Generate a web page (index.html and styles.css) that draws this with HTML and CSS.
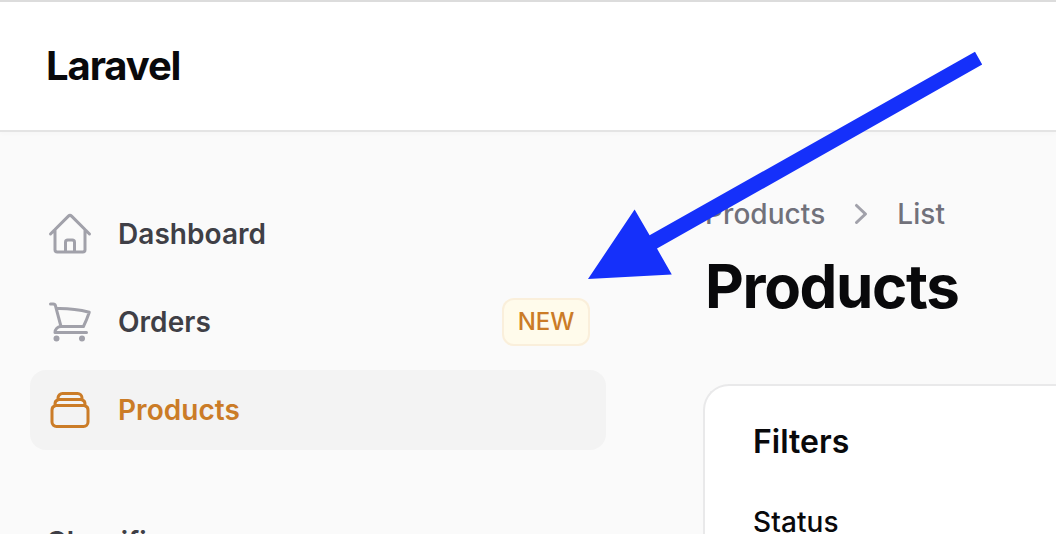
FILE: index.html
```html
<!DOCTYPE html>
<html lang="en">
<head>
<meta charset="utf-8">
<title>Products - Laravel</title>
<link rel="stylesheet" href="styles.css">
</head>
<body>
<header class="topbar"><div class="brand">Laravel</div></header>
<div class="layout">
  <aside class="sidebar">
    <nav class="nav">
      <a class="nav-item">
        <svg class="nav-icon" viewBox="0 0 24 24"><path d="M2.25 12l8.954-8.955c.44-.439 1.152-.439 1.591 0L21.75 12M4.5 9.75v10.125c0 .621.504 1.125 1.125 1.125H9.75v-4.875c0-.621.504-1.125 1.125-1.125h2.25c.621 0 1.125.504 1.125 1.125V21h4.125c.621 0 1.125-.504 1.125-1.125V9.75M8.25 21h8.25"/></svg>
        <span class="nav-label">Dashboard</span>
      </a>
      <a class="nav-item">
        <svg class="nav-icon" viewBox="0 0 24 24"><path d="M2.25 3h1.386c.51 0 .955.343 1.087.835l.383 1.437M7.5 14.25a3 3 0 00-3 3h15.75m-12.75-3h11.218c1.121-2.3 2.1-4.684 2.924-7.138a60.114 60.114 0 00-16.536-1.84M7.5 14.25L5.106 5.272M6 20.25a.75.75 0 11-1.5 0 .75.75 0 011.5 0zm12.75 0a.75.75 0 11-1.5 0 .75.75 0 011.5 0z"/></svg>
        <span class="nav-label">Orders</span>
        <span class="badge">NEW</span>
      </a>
      <a class="nav-item active">
        <svg class="nav-icon" viewBox="0 0 24 24"><path d="M6 6.878V6a2.25 2.25 0 012.25-2.25h7.5A2.25 2.25 0 0118 6v.878m-12 0c.235-.083.487-.128.75-.128h10.5c.263 0 .515.045.75.128m-12 0A2.25 2.25 0 004.5 9v.878m13.5-3A2.25 2.25 0 0119.5 9v.878m0 0a2.246 2.246 0 00-.75-.128H5.25c-.263 0-.515.045-.75.128m15 0A2.25 2.25 0 0121 12v6a2.25 2.25 0 01-2.25 2.25H5.25A2.25 2.25 0 013 18v-6c0-.98.626-1.813 1.5-2.122"/></svg>
        <span class="nav-label">Products</span>
      </a>
    </nav>
    <div class="group-label">Classifi</div>
  </aside>
  <main class="main">
    <div class="breadcrumbs">
      <span>Products</span>
      <svg class="chevron" viewBox="0 0 20 20"><path d="M7.21 14.77a.75.75 0 01.02-1.06L11.168 10 7.23 6.29a.75.75 0 111.04-1.08l4.5 4.25a.75.75 0 010 1.08l-4.5 4.25a.75.75 0 01-1.06-.02z"/></svg>
      <span>List</span>
    </div>
    <h1 class="title">Products</h1>
    <section class="card">
      <h2 class="card-title">Filters</h2>
      <div class="field-label">Status</div>
    </section>
  </main>
</div>
<svg class="arrow" viewBox="0 0 1056 534"><path d="M588 279L634.6 209.5L649.6 235.3L975 51.8L982.2 64.6L657 248.6L671.8 274.6Z"/></svg>
</body>
</html>
```
FILE: styles.css
```css
* { box-sizing: border-box; }
body {
  margin: 0;
  height: 534px;
  overflow: hidden;
  display: flex;
  flex-direction: column;
  background: #fafafa;
  color: #09090b;
  font-family: Inter, sans-serif;
  font-size: 28px;
  line-height: 40px;
}
.topbar {
  flex: none;
  height: 132px;
  padding-left: 46px;
  display: flex;
  align-items: center;
  background: #fff;
  border-top: 2px solid #dcdcdc;
  border-bottom: 2px solid #e4e4e4;
  box-shadow: 0 2px 4px rgba(0, 0, 0, .02);
}
.brand {
  font-size: 40px;
  font-weight: 700;
  letter-spacing: -1.1px;
}
.layout { display: flex; flex: 1; min-height: 0; }
.sidebar {
  flex: none;
  width: 640px;
  padding: 62px 34px 0 30px;
}
.nav { display: flex; flex-direction: column; gap: 8px; }
.nav-item {
  display: flex;
  align-items: center;
  gap: 24px;
  height: 80px;
  padding: 0 16px;
  border-radius: 16px;
  color: #3f3f46;
  font-weight: 600;
}
.nav-icon {
  width: 48px;
  height: 48px;
  fill: none;
  stroke: #a1a1aa;
  stroke-width: 1.5;
  stroke-linecap: round;
  stroke-linejoin: round;
}
.nav-label { flex: 1; letter-spacing: .05px; }
.active { background: #f3f3f3; color: #cb7c27; }
.active .nav-icon { stroke: #cb7c27; }
.badge {
  width: 88px;
  height: 48px;
  padding: 4px 0;
  text-align: center;
  border-radius: 12px;
  background: #fffbeb;
  box-shadow: inset 0 0 0 2px #faefdb;
  color: #cb7c27;
  font-size: 24px;
  font-weight: 500;
}
.group-label {
  padding: 72px 16px 0;
  color: #3f3f46;
  font-weight: 600;
}
.main { flex: 1; min-width: 0; padding: 62px 0 0 64px; }
.breadcrumbs {
  display: flex;
  align-items: center;
  gap: 16px;
  padding-left: 1px;
  color: #71717a;
  font-weight: 500;
  letter-spacing: .06px;
}
.chevron { width: 40px; height: 40px; fill: #a1a1aa; }
.title {
  margin: 16px 0 0 1px;
  font-size: 60px;
  line-height: 72px;
  font-weight: 700;
  letter-spacing: -1.35px;
}
.card {
  height: 300px;
  margin: 62px 0 0 -1px;
  padding: 32px 48px;
  background: #fff;
  border: 2px solid #e9e9ea;
  border-right: 0;
  border-radius: 26px 0 0 0;
}
.card-title {
  margin: 0;
  font-size: 32px;
  line-height: 48px;
  font-weight: 600;
}
.field-label { margin-top: 36px; font-weight: 500; letter-spacing: .1px; }
.arrow {
  position: absolute;
  top: 0;
  left: 0;
  width: 1056px;
  height: 534px;
  fill: #1530fa;
  pointer-events: none;
}
```
